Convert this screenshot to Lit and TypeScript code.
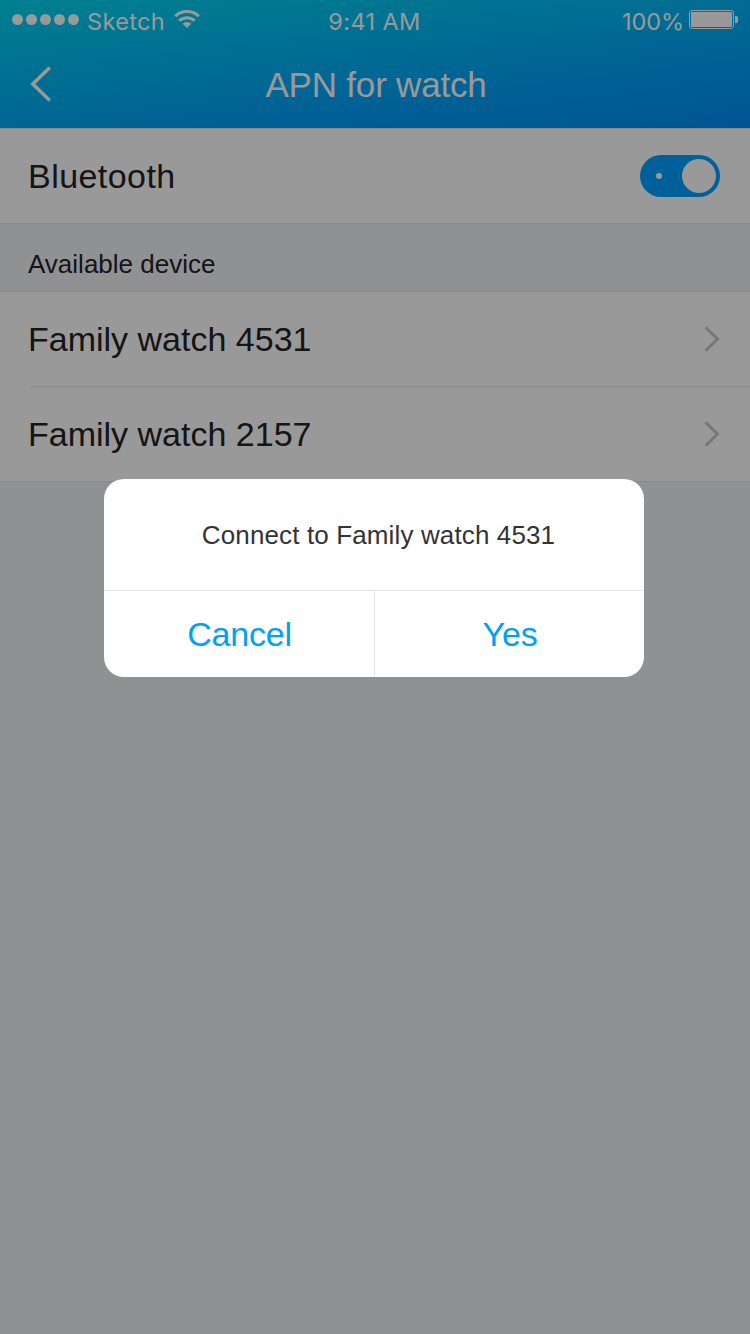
import { LitElement, html, css } from "lit";
import { customElement, property, state } from "lit/decorators.js";

@customElement("status-bar")
class StatusBar extends LitElement {
  static styles = css`
    :host {
      display: grid;
      grid-template-columns: 1fr auto 1fr;
      height: 40px;
      padding: 0 12px;
      box-sizing: border-box;
      color: #fff;
      font: 23.5px/44px Inter, "Liberation Sans", sans-serif;
    }
    .left,
    .right {
      display: flex;
      align-items: flex-start;
    }
    .right {
      justify-content: flex-end;
    }
    .dots {
      margin: 14px 8px 0 0;
    }
    .carrier {
      width: 78px;
      letter-spacing: 0.35px;
    }
    .wifi {
      margin: 10px 0 0 9px;
    }
    .time {
      letter-spacing: 0.4px;
      padding-right: 1px;
    }
    .percent {
      letter-spacing: -0.1px;
    }
    .battery {
      margin: 10px 0 0 5px;
    }
    svg {
      display: block;
    }
  `;
  render() {
    return html`
      <div class="left">
        <svg class="dots" width="67" height="11" fill="#fff">
          ${[0, 1, 2, 3, 4].map(
            (i) => html`<svg x=${i * 14} width="11" height="11"><circle cx="5.5" cy="5.5" r="5.5" /></svg>`
          )}
        </svg>
        <span class="carrier">Sketch</span>
        <svg class="wifi" width="26" height="18" viewBox="0 0 26 18" fill="none" stroke="#fff">
          <path d="M1.2 6.300A16.8 16.8 0 0 1 24.8 6.300" stroke-width="3" />
          <path d="M5.300 10.8A11 11 0 0 1 20.7 10.8" stroke-width="3" />
          <path d="M13 18L8.600 13.8A6.200 6.200 0 0 1 17.400 13.8Z" fill="#fff" stroke="none" />
        </svg>
      </div>
      <span class="time">9:41 AM</span>
      <div class="right">
        <span class="percent">100%</span>
        <svg class="battery" width="49" height="19" viewBox="0 0 49 19">
          <rect x=".5" y=".5" width="44" height="18" rx="2.5" fill="none" stroke="#fff" />
          <rect x="2" y="2" width="41" height="15" rx="1" fill="#fff" />
          <path d="M46 6h1.500q1.500 0 1.500 1.500v4q0 1.500-1.500 1.500H46z" fill="#fff" />
        </svg>
      </div>
    `;
  }
}

@customElement("toggle-switch")
class ToggleSwitch extends LitElement {
  static styles = css`
    :host {
      display: flex;
      align-items: center;
      justify-content: space-between;
      width: 80px;
      height: 42px;
      padding: 0 4px 0 16px;
      box-sizing: border-box;
      border-radius: 21px;
      background: #00a0ff;
    }
    .mark {
      width: 6px;
      height: 6px;
      border-radius: 50%;
      background: #fff;
    }
    .knob {
      width: 34px;
      height: 34px;
      border-radius: 50%;
      background: #fff;
    }
  `;
  render() {
    return html`<span class="mark"></span><span class="knob"></span>`;
  }
}

@customElement("confirm-dialog")
class ConfirmDialog extends LitElement {
  @property() message = "";
  static styles = css`
    :host {
      display: grid;
      grid-template-rows: 111px 1px 86px;
      width: 540px;
      height: 198px;
      border-radius: 20px;
      overflow: hidden;
      background: #fff;
    }
    .message {
      padding-left: 9px;
      font-size: 26px;
      line-height: 113px;
      text-align: center;
      color: #333;
      letter-spacing: 0.13px;
    }
    .line {
      background: #e5e5e5;
    }
    .actions {
      display: grid;
      grid-template-columns: 270px 1px 269px;
    }
    button {
      all: unset;
      padding-left: 1px;
      text-align: center;
      font-size: 34px;
      line-height: 87px;
      letter-spacing: -0.2px;
      color: #00a0f7;
    }
  `;
  render() {
    return html`
      <div class="message">${this.message}</div>
      <div class="line"></div>
      <div class="actions">
        <button>Cancel</button>
        <div class="line"></div>
        <button>Yes</button>
      </div>
    `;
  }
}

@customElement("app-root")
class AppRoot extends LitElement {
  @state() devices = ["Family watch 4531", "Family watch 2157"];

  static styles = css`
    :host {
      display: block;
      position: relative;
      width: 750px;
      height: 1334px;
      overflow: hidden;
      background: #eff2f5;
      color: #242424;
      font-family: "Liberation Sans", Arial, sans-serif;
    }
    header {
      height: 128px;
      background: linear-gradient(173deg, #00d6f0 0%, #00a4f8 65%, #008ef5 100%);
    }
    .nav {
      display: grid;
      grid-template-columns: 60px 1fr 60px;
      height: 88px;
    }
    .back {
      margin: 25px 0 0 29px;
    }
    h1 {
      margin: 0;
      padding-left: 2px;
      font-size: 35px;
      font-weight: 400;
      line-height: 90px;
      letter-spacing: -0.2px;
      text-align: center;
      color: #fff;
    }
    .row {
      display: flex;
      align-items: center;
      justify-content: space-between;
      height: 94px;
      padding: 0 30px 0 28px;
      box-sizing: border-box;
      background: #fff;
      font-size: 34px;
      line-height: 40px;
    }
    .bluetooth {
      padding-bottom: 1px;
      letter-spacing: 0.45px;
    }
    .edge {
      height: 1px;
      background: #e4e5e6;
    }
    .inset {
      padding-left: 30px;
      background: #fff;
    }
    .section {
      height: 67px;
      padding-left: 28px;
      font-size: 26px;
      line-height: 81px;
    }
    .scrim {
      position: absolute;
      inset: 0;
      background: rgba(0, 0, 0, 0.4);
    }
    confirm-dialog {
      position: absolute;
      left: 104px;
      top: 479px;
    }
    svg {
      display: block;
    }
  `;

  render() {
    return html`
      <header>
        <status-bar></status-bar>
        <div class="nav">
          <svg class="back" width="24" height="38" viewBox="0 0 24 38" fill="none" stroke="#fff" stroke-width="3.5">
            <path d="M20.800 2.500L3.800 19L20.800 35.500" />
          </svg>
          <h1>APN for watch</h1>
        </div>
      </header>
      <div class="edge"></div>
      <div class="row bluetooth"><span>Bluetooth</span><toggle-switch></toggle-switch></div>
      <div class="edge"></div>
      <div class="section">Available device</div>
      <div class="edge"></div>
      ${this.devices.map(
        (name, i) => html`
          <div class="row">
            <span>${name}</span>
            <svg width="16" height="26" viewBox="0 0 16 26" fill="none" stroke="#c7c7c7" stroke-width="3">
              <path d="M1.500 1.200L13.500 13L1.500 24.800" />
            </svg>
          </div>
          <div class=${i < this.devices.length - 1 ? "inset" : ""}><div class="edge"></div></div>
        `
      )}
      <div class="scrim"></div>
      <confirm-dialog message="Connect to Family watch 4531"></confirm-dialog>
    `;
  }
}
